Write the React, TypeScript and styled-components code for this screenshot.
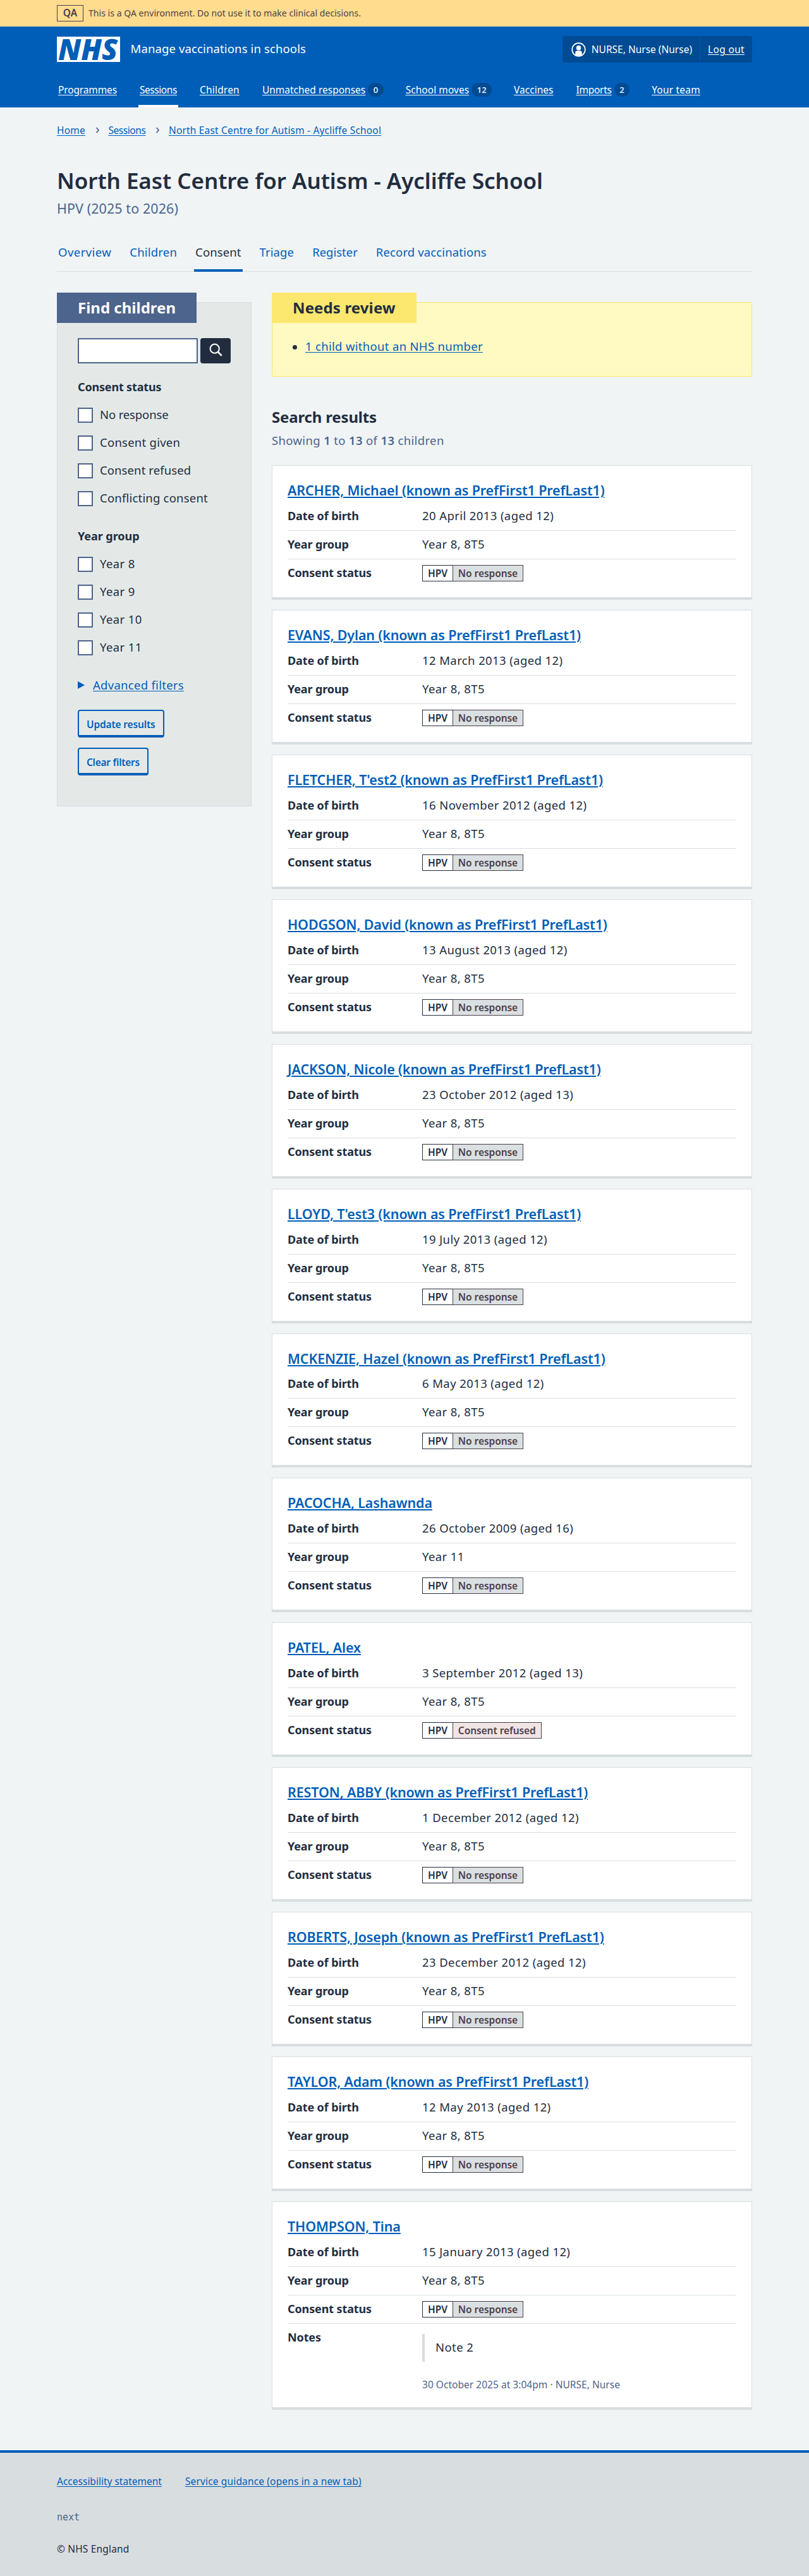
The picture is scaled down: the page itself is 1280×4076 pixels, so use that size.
import React from 'react';
import styled, { createGlobalStyle } from 'styled-components';

const c = {
  ink: '#212d3f',
  blue: '#005eb8',
  darkBlue: '#004b93',
  slate: '#4d648c',
  page: '#f0f4f5',
  line: '#d8dde0',
  panel: '#e4e9e8',
  warm: '#4a4047',
};

const GlobalStyle = createGlobalStyle`
  *, *::before, *::after { box-sizing: border-box; }
  body {
    margin: 0;
    background: ${c.page};
    color: ${c.ink};
    font-family: "Noto Sans", "Open Sans", sans-serif;
    font-size: 18.5px;
    font-weight: 400;
    line-height: 28px;
  }
  h1, h2, h3, p, ul, ol, dl, dd, dt, blockquote, fieldset, legend { margin: 0; padding: 0; }
  fieldset { border: 0; min-width: 0; }
  ul, ol { list-style: none; }
`;

type Track = { $ls?: number };
const tracking = (p: Track) => `letter-spacing: ${p.$ls ?? 0}px;`;

const Container = styled.div`
  width: 1100px;
  margin: 0 auto;
`;

const EnvBanner = styled.div`
  background: #ffdc8e;
  color: ${c.warm};
  height: 42px;
`;
const EnvRow = styled(Container)`
  display: flex;
  align-items: center;
  gap: 8px;
  height: 42px;
  font-size: 14px;
  letter-spacing: 0.04px;
`;
const EnvTag = styled.strong`
  width: 42px;
  height: 26px;
  border: 1px solid ${c.warm};
  font-size: 15.5px;
  font-weight: 600;
  line-height: 22px;
  text-align: center;
`;

const Header = styled.header`
  background: ${c.blue};
  color: #fff;
`;
const HeaderTop = styled(Container)`
  display: flex;
  align-items: center;
  justify-content: space-between;
  padding: 15px 0;
`;
const Brand = styled.div`
  display: flex;
  align-items: center;
  gap: 16.5px;
`;
const ServiceName = styled.span`
  font-size: 18.5px;
  letter-spacing: 0.13px;
  padding-bottom: 2px;
`;
const Account = styled.div`
  display: flex;
  align-items: center;
  height: 42px;
  background: ${c.darkBlue};
  border-radius: 4px;
  font-size: 15.5px;
`;
const AccountUser = styled.span`
  display: flex;
  align-items: center;
  gap: 9px;
  height: 40px;
  padding: 0 12px 0 14px;
  border-right: 1px solid ${c.blue};
`;
const LogOut = styled.a`
  color: #fff;
  padding: 0 12px;
  letter-spacing: 0.33px;
  text-decoration: underline;
  text-underline-offset: 2px;
`;

const NavList = styled(Container).attrs({ as: 'ul' })`
  display: flex;
  gap: 32px;
  height: 56px;
`;
const NavItem = styled.li<{ $on?: boolean }>`
  display: flex;
  align-items: center;
  gap: 4px;
  padding: 4px 2px 0;
  border-bottom: 4px solid ${(p) => (p.$on ? '#fff' : 'transparent')};
`;
const NavLink = styled.a<Track>`
  color: #fff;
  font-size: 15.5px;
  white-space: nowrap;
  text-decoration: underline;
  text-underline-offset: 2px;
  ${tracking}
`;
const Count = styled.span`
  min-width: 24px;
  height: 22px;
  margin-right: -1px;
  padding: 0 8.5px;
  border-radius: 12px;
  background: ${c.darkBlue};
  font-size: 13px;
  font-weight: 500;
  line-height: 22px;
  text-align: center;
`;

const Crumbs = styled.ol`
  display: flex;
  align-items: center;
  padding-top: 24px;
  font-size: 15.5px;
  line-height: 24px;
`;
const Crumb = styled.li`
  display: flex;
  align-items: center;
`;
const Chevron = styled.svg`
  width: 7px;
  height: 10px;
  margin: 0 13.5px 0 16px;
`;
const Link = styled.a<Track>`
  color: ${c.blue};
  text-decoration: underline;
  text-decoration-thickness: 1px;
  text-underline-offset: 2px;
  white-space: nowrap;
  ${tracking}
`;

const Title = styled.h1`
  margin-top: 46px;
  font-size: 35px;
  font-weight: 600;
  line-height: 44px;
  letter-spacing: -0.05px;
`;
const Caption = styled.p`
  margin-top: 6px;
  color: ${c.slate};
  font-size: 21.5px;
  line-height: 32px;
  letter-spacing: 0.07px;
`;

const Tabs = styled.ul`
  display: flex;
  gap: 25px;
  height: 62px;
  margin-top: 22px;
  box-shadow: inset 0 -1px ${c.line};
`;
const Tab = styled.li<{ $on?: boolean } & Track>`
  display: flex;
  align-items: center;
  padding: 4px 2px 0;
  border-bottom: 4px solid ${(p) => (p.$on ? c.blue : 'transparent')};
  color: ${(p) => (p.$on ? c.ink : c.blue)};
  white-space: nowrap;
  ${tracking}
`;

const Columns = styled.div`
  display: grid;
  grid-template-columns: 308px 760px;
  gap: 32px;
  align-items: start;
  padding: 33px 0 64px;
`;

const Panel = styled.section<{ $tone: 'filter' | 'warning' }>`
  margin-top: 15px;
  padding: 0 32px ${(p) => (p.$tone === 'filter' ? 48 : 33)}px;
  border: 1px solid ${(p) => (p.$tone === 'filter' ? c.line : '#fce76f')};
  background: ${(p) => (p.$tone === 'filter' ? c.panel : '#fff9c2')};
`;
const PanelLabel = styled.h2<{ $tone: 'filter' | 'warning' } & Track>`
  width: fit-content;
  height: 48px;
  margin: -16px 0 0 -33px;
  padding: 0 33px;
  background: ${(p) => (p.$tone === 'filter' ? c.slate : '#fce76f')};
  color: ${(p) => (p.$tone === 'filter' ? '#fff' : c.ink)};
  font-size: 24px;
  font-weight: 700;
  line-height: 48px;
  white-space: nowrap;
  ${tracking}
`;

const SearchRow = styled.div`
  display: flex;
  gap: 4px;
  margin-top: 24px;
`;
const SearchInput = styled.input`
  width: 190px;
  height: 40px;
  border: 2px solid ${c.slate};
  border-radius: 0;
  background: #fff;
`;
const SearchButton = styled.button`
  width: 48px;
  height: 40px;
  padding: 0;
  border: 0;
  border-radius: 4px;
  background: ${c.ink};
  svg { display: block; }
`;

const Group = styled.fieldset<{ $top: number }>`
  margin-top: ${(p) => p.$top}px;
`;
const Legend = styled.legend<Track>`
  margin-bottom: 19px;
  font-size: 18px;
  font-weight: 700;
  ${tracking}
`;
const Options = styled.div`
  display: grid;
  gap: 20px;
`;
const Option = styled.label<Track>`
  display: flex;
  align-items: center;
  gap: 11px;
  height: 24px;
  white-space: nowrap;
  ${tracking}
  span { padding-bottom: 3px; }
`;
const Box = styled.i`
  width: 24px;
  height: 24px;
  border: 2px solid ${c.slate};
  background: #fff;
`;

const Advanced = styled.div`
  display: flex;
  align-items: center;
  gap: 13px;
  margin-top: 33px;
`;
const Buttons = styled.div`
  display: flex;
  flex-direction: column;
  align-items: flex-start;
  gap: 16px;
  margin-top: 25px;
`;
const Button = styled.button<Track>`
  height: 44px;
  padding: 3px 12px 0;
  border: 2px solid ${c.blue};
  border-bottom-width: 4px;
  border-radius: 4px;
  background: transparent;
  color: ${c.blue};
  font: 600 15.5px/24px "Noto Sans", sans-serif;
  ${tracking}
`;

const ReviewList = styled.ul`
  margin-top: 23px;
`;
const ReviewItem = styled.li`
  display: flex;
  align-items: center;
  gap: 13px;
  &::before {
    content: '';
    width: 7px;
    height: 7px;
    margin-top: 3px;
    border-radius: 50%;
    background: ${c.ink};
  }
`;

const ResultsTitle = styled.h2`
  margin-top: 48px;
  font-size: 24px;
  font-weight: 700;
  line-height: 32px;
  letter-spacing: -0.16px;
`;
const Showing = styled.p`
  margin: 7px 0 25px;
  color: ${c.slate};
  letter-spacing: 0.35px;
  b { font-weight: 600; }
`;

const Cards = styled.div`
  display: grid;
  gap: 16px;
`;
const Card = styled.article`
  padding: 24px 24px 16px;
  border: 1px solid ${c.line};
  border-bottom-width: 4px;
  background: #fff;
`;
const CardTitle = styled.h3`
  margin-bottom: 4px;
  font-size: 21.5px;
  font-weight: 600;
  line-height: 29.92px;
  a { text-decoration-thickness: 2px; }
`;
const Row = styled.div`
  display: grid;
  grid-template-columns: 213px 1fr;
  padding: 7px 0 9px;
  border-bottom: 1px solid ${c.line};
  &:last-child { border-bottom: 0; }
`;
const Key = styled.dt`
  font-size: 18px;
  font-weight: 700;
  letter-spacing: -0.12px;
`;
const Value = styled.dd`
  letter-spacing: 0.4px;
`;
const StatusTag = styled.span`
  display: flex;
  width: fit-content;
  height: 26px;
  margin-top: 2px;
  font-size: 15.5px;
  font-weight: 600;
  line-height: 24px;
  letter-spacing: -0.06px;
`;
const Vaccine = styled.span`
  padding: 0 8px;
  border: 1px solid ${c.ink};
  border-right: 0;
`;
const Outcome = styled.span<{ $refused: boolean }>`
  padding: 0 8px;
  border: 1px solid ${c.warm};
  background: ${(p) => (p.$refused ? '#f1e4e4' : '#dadfe2')};
  color: ${c.warm};
`;
const Quote = styled.blockquote`
  margin-top: 9px;
  padding: 7px 0 9px 17px;
  border-left: 4px solid ${c.line};
`;
const NoteMeta = styled.p`
  margin-top: 26px;
  color: ${c.slate};
  font-size: 15.5px;
  line-height: 21px;
  letter-spacing: 0.03px;
`;

const Footer = styled.footer`
  padding: 33px 0 31px;
  border-top: 4px solid ${c.blue};
  background: ${c.line};
  font-size: 15.5px;
  line-height: 24px;
`;
const FooterLinks = styled.div`
  display: flex;
  gap: 37px;
`;
const Version = styled.p`
  margin: 33px 0 26px;
  color: ${c.slate};
  font: 15px/24px "DejaVu Sans Mono", monospace;
`;
const Copyright = styled.p`
  letter-spacing: 0.17px;
`;

const Logo = styled.svg`
  overflow: visible;
`;
const NhsLogo = () => (
  <Logo width="100" height="40" viewBox="0 0 100 40" role="img" aria-label="NHS">
    <rect width="100" height="40" fill="#fff" />
    <text
      x="2"
      y="36.5"
      fill={c.blue}
      fontFamily="Noto Sans, Open Sans, sans-serif"
      fontSize="46"
      fontStyle="italic"
      fontWeight="900"
      textLength="94"
      lengthAdjust="spacingAndGlyphs"
    >
      NHS
    </text>
  </Logo>
);

const UserIcon = () => (
  <svg width="23" height="23" viewBox="0 0 23 23">
    <circle cx="11.5" cy="11.5" r="10.3" fill="none" stroke="#fff" strokeWidth="1.7" />
    <rect x="7.9" y="5" width="7.2" height="7.4" rx="3.2" fill="#fff" />
    <path d="M6.3 20.5v-4.2c0-1.9 1.1-3 3-3h4.4c1.9 0 3 1.1 3 3v4.2a10.3 10.3 0 0 1-10.4 0z" fill="#fff" />
  </svg>
);

const SearchIcon = () => (
  <svg width="48" height="40" viewBox="0 0 48 40" fill="none" stroke="#fff">
    <circle cx="22.7" cy="16.7" r="7.1" strokeWidth="2" />
    <path d="M28 22l5 5" strokeWidth="2.5" strokeLinecap="round" />
  </svg>
);

const nav: { label: string; count?: number; ls: number; on?: boolean }[] = [
  { label: 'Programmes', ls: -0.14 },
  { label: 'Sessions', ls: -0.43, on: true },
  { label: 'Children', ls: 0.2 },
  { label: 'Unmatched responses', count: 0, ls: 0 },
  { label: 'School moves', count: 12, ls: 0.05 },
  { label: 'Vaccines', ls: 0 },
  { label: 'Imports', count: 2, ls: -0.25 },
  { label: 'Your team', ls: 0.2 },
];

const tabs: { label: string; ls: number; on?: boolean }[] = [
  { label: 'Overview', ls: 0.45 },
  { label: 'Children', ls: 0.2 },
  { label: 'Consent', ls: 0.1, on: true },
  { label: 'Triage', ls: 0.1 },
  { label: 'Register', ls: 0 },
  { label: 'Record vaccinations', ls: 0.13 },
];

const consentOptions: [string, number][] = [
  ['No response', -0.13],
  ['Consent given', 0.25],
  ['Consent refused', 0.1],
  ['Conflicting consent', 0.2],
];
const years: [string, number][] = [
  ['Year 8', 0.4],
  ['Year 9', 0.4],
  ['Year 10', 0.4],
  ['Year 11', 0.4],
];

type Child = { name: string; dob: string; year?: string; refused?: boolean; note?: boolean };
const pref = ' (known as PrefFirst1 PrefLast1)';
const children: Child[] = [
  { name: 'ARCHER, Michael' + pref, dob: '20 April 2013 (aged 12)' },
  { name: 'EVANS, Dylan' + pref, dob: '12 March 2013 (aged 12)' },
  { name: "FLETCHER, T'est2" + pref, dob: '16 November 2012 (aged 12)' },
  { name: 'HODGSON, David' + pref, dob: '13 August 2013 (aged 12)' },
  { name: 'JACKSON, Nicole' + pref, dob: '23 October 2012 (aged 13)' },
  { name: "LLOYD, T'est3" + pref, dob: '19 July 2013 (aged 12)' },
  { name: 'MCKENZIE, Hazel' + pref, dob: '6 May 2013 (aged 12)' },
  { name: 'PACOCHA, Lashawnda', dob: '26 October 2009 (aged 16)', year: 'Year 11' },
  { name: 'PATEL, Alex', dob: '3 September 2012 (aged 13)', refused: true },
  { name: 'RESTON, ABBY' + pref, dob: '1 December 2012 (aged 12)' },
  { name: 'ROBERTS, Joseph' + pref, dob: '23 December 2012 (aged 12)' },
  { name: 'TAYLOR, Adam' + pref, dob: '12 May 2013 (aged 12)' },
  { name: 'THOMPSON, Tina', dob: '15 January 2013 (aged 12)', note: true },
];

const OptionGroup = ({ title, top, ls, items }: { title: string; top: number; ls: number; items: [string, number][] }) => (
  <Group $top={top}>
    <Legend $ls={ls}>{title}</Legend>
    <Options>
      {items.map(([label, track]) => (
        <Option key={label} $ls={track}>
          <Box />
          <span>{label}</span>
        </Option>
      ))}
    </Options>
  </Group>
);

const ChildCard = ({ child }: { child: Child }) => (
  <Card>
    <CardTitle>
      <Link $ls={-0.13}>{child.name}</Link>
    </CardTitle>
    <dl>
      <Row>
        <Key>Date of birth</Key>
        <Value>{child.dob}</Value>
      </Row>
      <Row>
        <Key>Year group</Key>
        <Value>{child.year ?? 'Year 8, 8T5'}</Value>
      </Row>
      <Row>
        <Key>Consent status</Key>
        <Value>
          <StatusTag>
            <Vaccine>HPV</Vaccine>
            <Outcome $refused={!!child.refused}>{child.refused ? 'Consent refused' : 'No response'}</Outcome>
          </StatusTag>
        </Value>
      </Row>
      {child.note && (
        <Row>
          <Key>Notes</Key>
          <Value>
            <Quote>Note 2</Quote>
            <NoteMeta>30 October 2025 at 3:04pm · NURSE, Nurse</NoteMeta>
          </Value>
        </Row>
      )}
    </dl>
  </Card>
);

export default function App() {
  return (
    <>
      <GlobalStyle />
      <EnvBanner>
        <EnvRow>
          <EnvTag>QA</EnvTag>
          <span>This is a QA environment. Do not use it to make clinical decisions.</span>
        </EnvRow>
      </EnvBanner>
      <Header>
        <HeaderTop>
          <Brand>
            <NhsLogo />
            <ServiceName>Manage vaccinations in schools</ServiceName>
          </Brand>
          <Account>
            <AccountUser>
              <UserIcon />
              NURSE, Nurse (Nurse)
            </AccountUser>
            <LogOut>Log out</LogOut>
          </Account>
        </HeaderTop>
        <NavList>
          {nav.map((item) => (
            <NavItem key={item.label} $on={item.on}>
              <NavLink $ls={item.ls}>{item.label}</NavLink>
              {item.count !== undefined && <Count>{item.count}</Count>}
            </NavItem>
          ))}
        </NavList>
      </Header>
      <Container>
        <Crumbs>
          {['Home', 'Sessions', 'North East Centre for Autism - Aycliffe School'].map((label, i) => (
            <Crumb key={label}>
              {i > 0 && (
                <Chevron viewBox="0 0 7 10" fill="none" stroke={c.slate} strokeWidth="1.8">
                  <path d="M1.5 1l3.5 4-3.5 4" />
                </Chevron>
              )}
              <Link $ls={[0.2, -0.43, 0.18][i]}>{label}</Link>
            </Crumb>
          ))}
        </Crumbs>
        <Title>North East Centre for Autism - Aycliffe School</Title>
        <Caption>HPV (2025 to 2026)</Caption>
        <Tabs>
          {tabs.map((tab) => (
            <Tab key={tab.label} $on={tab.on} $ls={tab.ls}>
              {tab.label}
            </Tab>
          ))}
        </Tabs>
        <Columns>
          <Panel $tone="filter">
            <PanelLabel $tone="filter" $ls={0}>Find children</PanelLabel>
            <SearchRow>
              <SearchInput aria-label="Search" />
              <SearchButton aria-label="Search">
                <SearchIcon />
              </SearchButton>
            </SearchRow>
            <OptionGroup title="Consent status" top={23} ls={-0.17} items={consentOptions} />
            <OptionGroup title="Year group" top={33} ls={-0.05} items={years} />
            <Advanced>
              <svg width="11" height="12" viewBox="0 0 11 12">
                <path d="M0 0l11 6-11 6z" fill={c.blue} />
              </svg>
              <Link $ls={0.28}>Advanced filters</Link>
            </Advanced>
            <Buttons>
              <Button $ls={-0.16}>Update results</Button>
              <Button $ls={-0.27}>Clear filters</Button>
            </Buttons>
          </Panel>
          <div>
            <Panel $tone="warning">
              <PanelLabel $tone="warning" $ls={0.13}>Needs review</PanelLabel>
              <ReviewList>
                <ReviewItem>
                  <Link $ls={0.31}>1 child without an NHS number</Link>
                </ReviewItem>
              </ReviewList>
            </Panel>
            <ResultsTitle>Search results</ResultsTitle>
            <Showing>
              Showing <b>1</b> to <b>13</b> of <b>13</b> children
            </Showing>
            <Cards>
              {children.map((child) => (
                <ChildCard key={child.name} child={child} />
              ))}
            </Cards>
          </div>
        </Columns>
      </Container>
      <Footer>
        <Container>
          <FooterLinks>
            <Link>Accessibility statement</Link>
            <Link $ls={0.15}>Service guidance (opens in a new tab)</Link>
          </FooterLinks>
          <Version>next</Version>
          <Copyright>© NHS England</Copyright>
        </Container>
      </Footer>
    </>
  );
}
